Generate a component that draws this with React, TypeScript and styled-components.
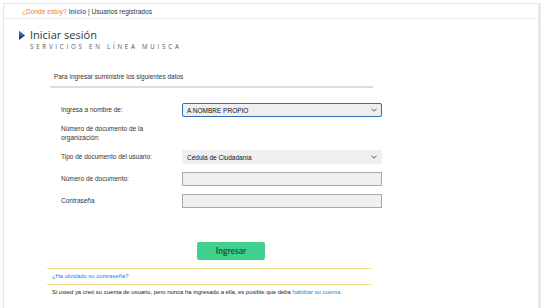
import styled, { createGlobalStyle } from "styled-components";

const GlobalStyle = createGlobalStyle`
  html, body {
    margin: 0;
    padding: 0;
    background: #fff;
  }
  body {
    font-family: "Liberation Sans", Arial, sans-serif;
    color: #333;
  }
`;

const Frame = styled.div`
  margin: 3px 4px 0 3px;
  height: 305px;
  box-sizing: border-box;
  border-left: 1px solid #e6e6e6;
  border-top: 1px solid #e6e6e6;
  border-right: 3px solid #e8e8e8;
`;

const Crumbs = styled.div`
  height: 14px;
  display: flex;
  align-items: center;
  gap: 2px;
  padding-left: 18px;
  border-bottom: 1px solid #ebebeb;
  font-size: 6.6px;
  color: #333;
`;

const Where = styled.span`
  color: #ef7d2d;
`;

const Home = styled.span`
  color: #2a7fd5;
  font-weight: bold;
`;

const Header = styled.div`
  display: flex;
  gap: 5px;
  padding: 8px 0 0 15px;
`;

const TitleBlock = styled.div`
  display: flex;
  flex-direction: column;
`;

const Title = styled.h1`
  margin: 0;
  font-family: "Open Sans", sans-serif;
  font-weight: 400;
  font-size: 11px;
  line-height: 15px;
  color: #263838;
`;

const Subtitle = styled.div`
  font-family: "Open Sans", sans-serif;
  font-size: 6.2px;
  letter-spacing: 2.75px;
  color: #555;
  line-height: 9px;
`;

const Section = styled.div`
  margin: 21px 0 0 43px;
  width: 340px;
`;

const Intro = styled.div`
  padding-left: 7px;
  font-size: 6.5px;
  line-height: 9px;
`;

const Rule = styled.div`
  margin: 5px 0 0 3px;
  width: 323px;
  height: 2px;
  background: #dcdcdc;
`;

const Rows = styled.div`
  display: grid;
  grid-template-columns: 121px 200px;
  row-gap: 8px;
  padding: 15px 0 0 14px;
  align-items: center;
`;

const Label = styled.div`
  font-size: 6.5px;
  line-height: 8.5px;
  color: #333;
`;

const SelectBox = styled.div<{ $focus?: boolean }>`
  height: 14px;
  box-sizing: border-box;
  display: flex;
  align-items: center;
  justify-content: space-between;
  padding: 0 4px;
  background: #efefef;
  border: 1px solid ${(p) => (p.$focus ? "#2f6db5" : "#efefef")};
  border-radius: 2px;
  font-size: 6.5px;
  color: #111;
`;

const TextBox = styled.div`
  height: 14px;
  box-sizing: border-box;
  background: #efefef;
  border: 1px solid #a9a9a9;
`;

const ButtonRow = styled.div`
  padding: 32px 0 0 150px;
`;

const Button = styled.button`
  width: 68px;
  height: 18px;
  border: none;
  border-radius: 2px;
  background: #3fd18c;
  color: #1d5a3e;
  font-family: "Lato", sans-serif;
  font-weight: 700;
  font-size: 8.5px;
  padding: 0;
`;

const Notes = styled.div`
  margin-top: 8px;
  width: 324px;
  border-top: 1px solid #f3df8a;
`;

const Note = styled.div<{ $line?: boolean }>`
  padding: 3px 5px 0;
  height: ${(p) => (p.$line ? "12px" : "14px")};
  font-size: 5.9px;
  line-height: 9px;
  white-space: nowrap;
  color: #222;
  border-bottom: ${(p) => (p.$line ? "1px solid #f3df8a" : "none")};
`;

const Link = styled.a`
  color: #2b7fd8;
  text-decoration: none;
`;

function Arrow() {
  return (
    <svg width="6" height="9" viewBox="0 0 6 9" style={{ marginTop: 4 }}>
      <polygon points="0,0 6,4.5 0,9" fill="#1f3f7a" />
      <polygon points="0,0 6,4.5 0,4.5" fill="#3b6bb5" />
    </svg>
  );
}

function Chevron() {
  return (
    <svg width="6" height="4" viewBox="0 0 6 4">
      <path d="M0.5 0.8 L3 3.2 L5.5 0.8" stroke="#444" strokeWidth="0.9" fill="none" />
    </svg>
  );
}

export default function App() {
  return (
    <>
      <GlobalStyle />
      <Frame>
        <Crumbs>
          <Where>¿Dónde estoy?</Where>
          <Home>Inicio</Home>
          <span>| Usuarios registrados</span>
        </Crumbs>
        <Header>
          <Arrow />
          <TitleBlock>
            <Title>Iniciar sesión</Title>
            <Subtitle>SERVICIOS EN LÍNEA MUISCA</Subtitle>
          </TitleBlock>
        </Header>
        <Section>
          <Intro>Para ingresar suministre los siguientes datos</Intro>
          <Rule />
          <Rows>
            <Label>Ingresa a nombre de:</Label>
            <SelectBox $focus>
              <span>A NOMBRE PROPIO</span>
              <Chevron />
            </SelectBox>
            <Label>
              Número de documento de la
              <br />
              organización:
            </Label>
            <div />
            <Label>Tipo de documento del usuario:</Label>
            <SelectBox>
              <span>Cédula de Ciudadanía</span>
              <Chevron />
            </SelectBox>
            <Label>Número de documento:</Label>
            <TextBox />
            <Label>Contraseña</Label>
            <TextBox />
          </Rows>
          <ButtonRow>
            <Button>Ingresar</Button>
          </ButtonRow>
          <Notes>
            <Note $line>
              <Link href="#">¿Ha olvidado su contraseña?</Link>
            </Note>
            <Note>
              Si usted ya creó su cuenta de usuario, pero nunca ha ingresado a ella, es posible que deba{" "}
              <Link href="#">habilitar su cuenta.</Link>
            </Note>
          </Notes>
        </Section>
      </Frame>
    </>
  );
}
